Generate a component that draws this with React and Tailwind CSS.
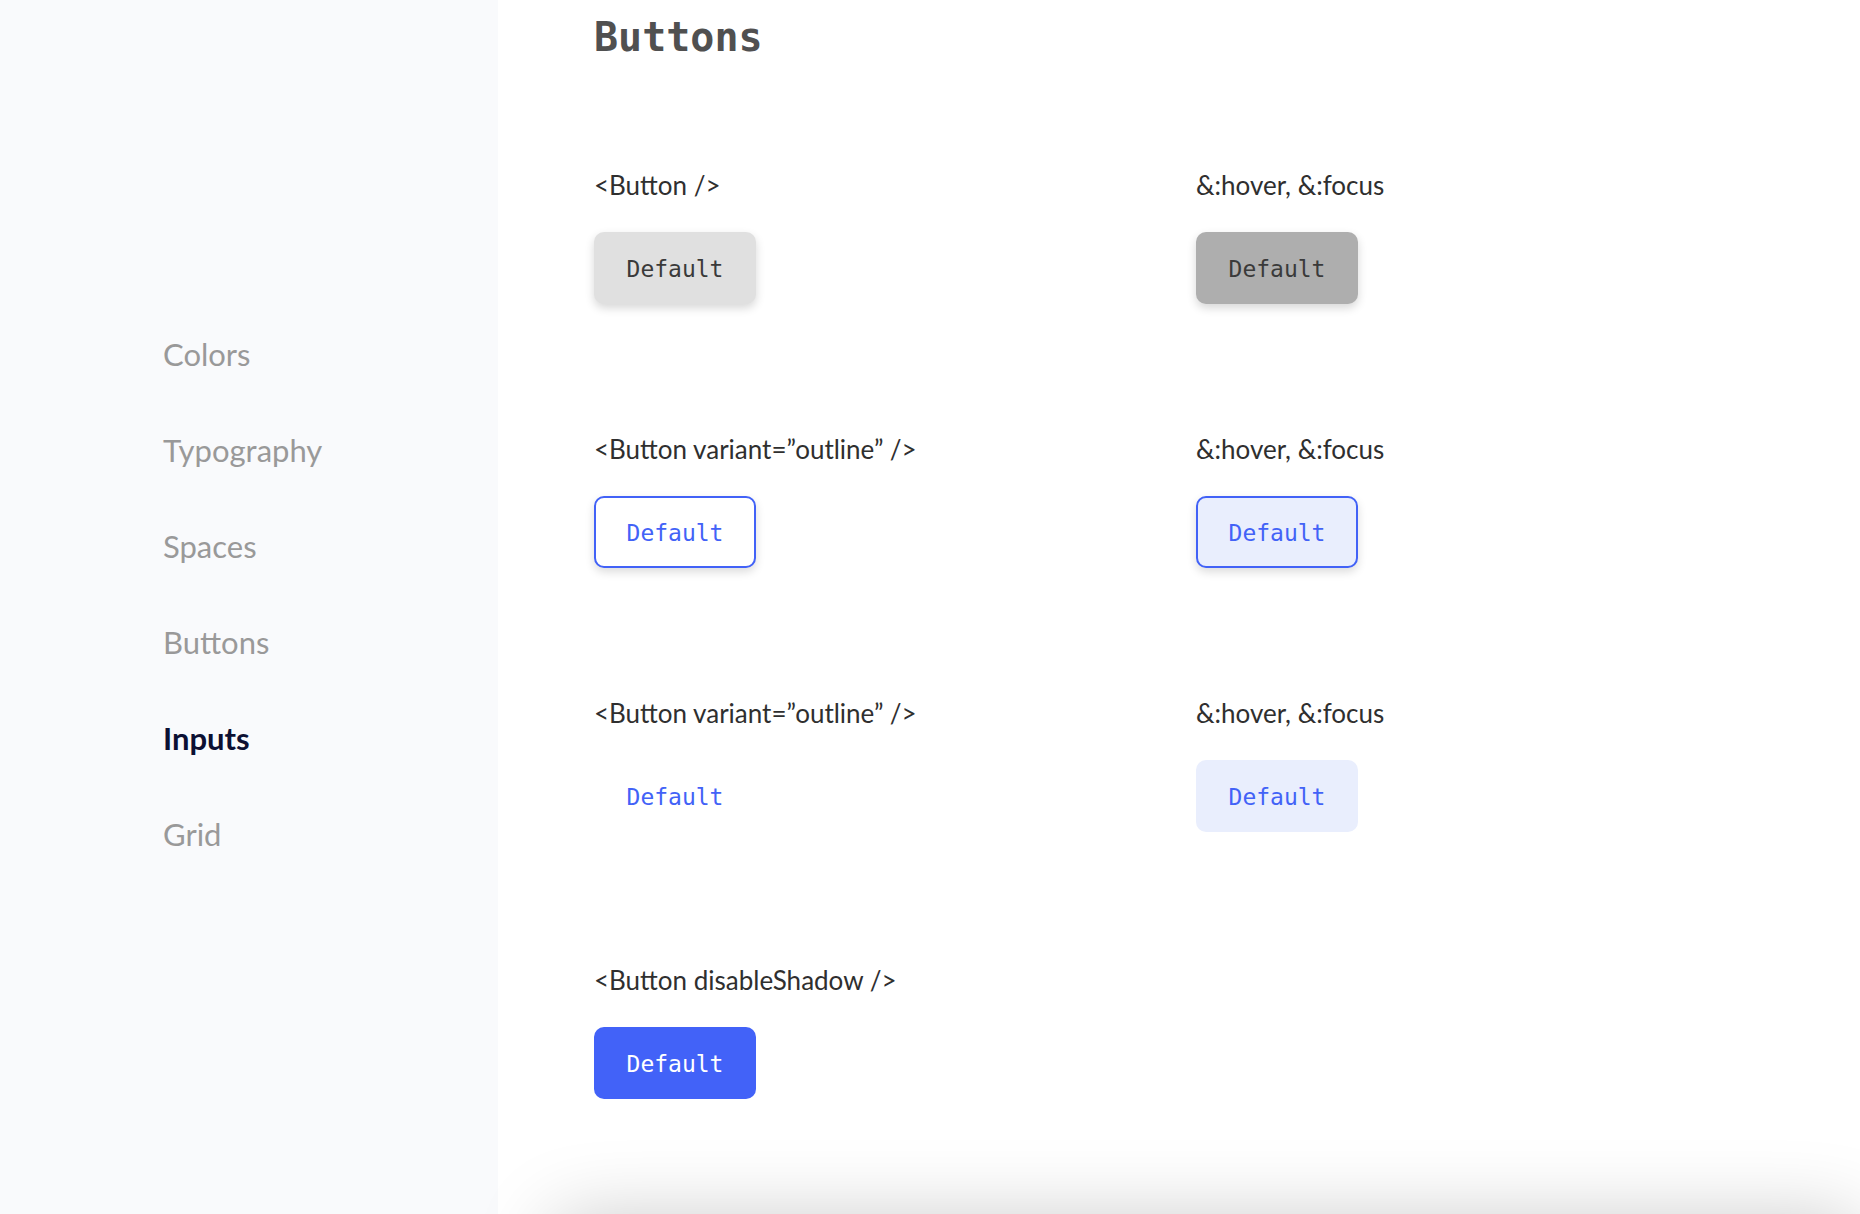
import React from "react";

const mono = "font-['DejaVu_Sans_Mono',monospace]";
const sans = "font-['Lato','Noto_Sans',sans-serif]";

function Btn({ variant }) {
  const base = `w-[162px] h-[72px] rounded-[10px] flex items-center justify-center pt-[3px] text-[23px] ${mono}`;
  const styles = {
    default: "bg-[#e0e0e0] text-[#3a3a3a] shadow-[0_4px_10px_rgba(0,0,0,0.16)]",
    defaultHover: "bg-[#aeaeae] text-[#3a3a3a] shadow-[0_4px_10px_rgba(0,0,0,0.16)]",
    outline: "bg-white text-[#4262f7] border-2 border-[#4262f7] shadow-[0_4px_10px_rgba(0,0,0,0.14)]",
    outlineHover: "bg-[#e9eefd] text-[#4262f7] border-2 border-[#4262f7] shadow-[0_4px_10px_rgba(0,0,0,0.14)]",
    text: "bg-transparent text-[#4262f7]",
    textHover: "bg-[#e9eefd] text-[#4262f7]",
    filled: "bg-[#4262f8] text-white",
  };
  return <div className={`${base} ${styles[variant]}`}>Default</div>;
}

function Cell({ label, variant }) {
  return (
    <div className="flex flex-col gap-[31px]">
      <div className={`${sans} text-[26px] leading-[32px] text-[#2f2f2f]`}>{label}</div>
      <Btn variant={variant} />
    </div>
  );
}

export default function App() {
  const nav = ["Colors", "Typography", "Spaces", "Buttons", "Inputs", "Grid"];
  return (
    <div className="flex min-h-screen bg-white overflow-hidden">
      <aside className="w-[498px] shrink-0 bg-[#f9fafc] pl-[163px] pt-[335px]">
        <ul className="flex flex-col gap-[58px]">
          {nav.map((n) => (
            <li
              key={n}
              className={`${sans} text-[31px] leading-[38px] ${
                n === "Inputs" ? "font-bold text-[#0c1033]" : "text-[#999999]"
              }`}
            >
              {n}
            </li>
          ))}
        </ul>
      </aside>
      <main className="flex-1 pl-[96px] pt-[13px]">
        <h1 className={`${mono} font-bold text-[40px] leading-[48px] text-[#505050]`}>Buttons</h1>
        <div className="mt-[108px] flex flex-col gap-[129px]">
          <div className="grid grid-cols-[602px_1fr]">
            <Cell label="<Button />" variant="default" />
            <Cell label="&:hover, &:focus" variant="defaultHover" />
          </div>
          <div className="grid grid-cols-[602px_1fr]">
            <Cell label="<Button variant=”outline” />" variant="outline" />
            <Cell label="&:hover, &:focus" variant="outlineHover" />
          </div>
          <div className="grid grid-cols-[602px_1fr]">
            <Cell label="<Button variant=”outline” />" variant="text" />
            <Cell label="&:hover, &:focus" variant="textHover" />
          </div>
          <div className="grid grid-cols-[602px_1fr] mt-[3px]">
            <Cell label="<Button disableShadow />" variant="filled" />
          </div>
        </div>
        <div className="mt-[121px] -ml-[40px] h-[300px] bg-white rounded-[16px] shadow-[0_0_80px_rgba(0,0,0,0.22)]" />
      </main>
    </div>
  );
}
